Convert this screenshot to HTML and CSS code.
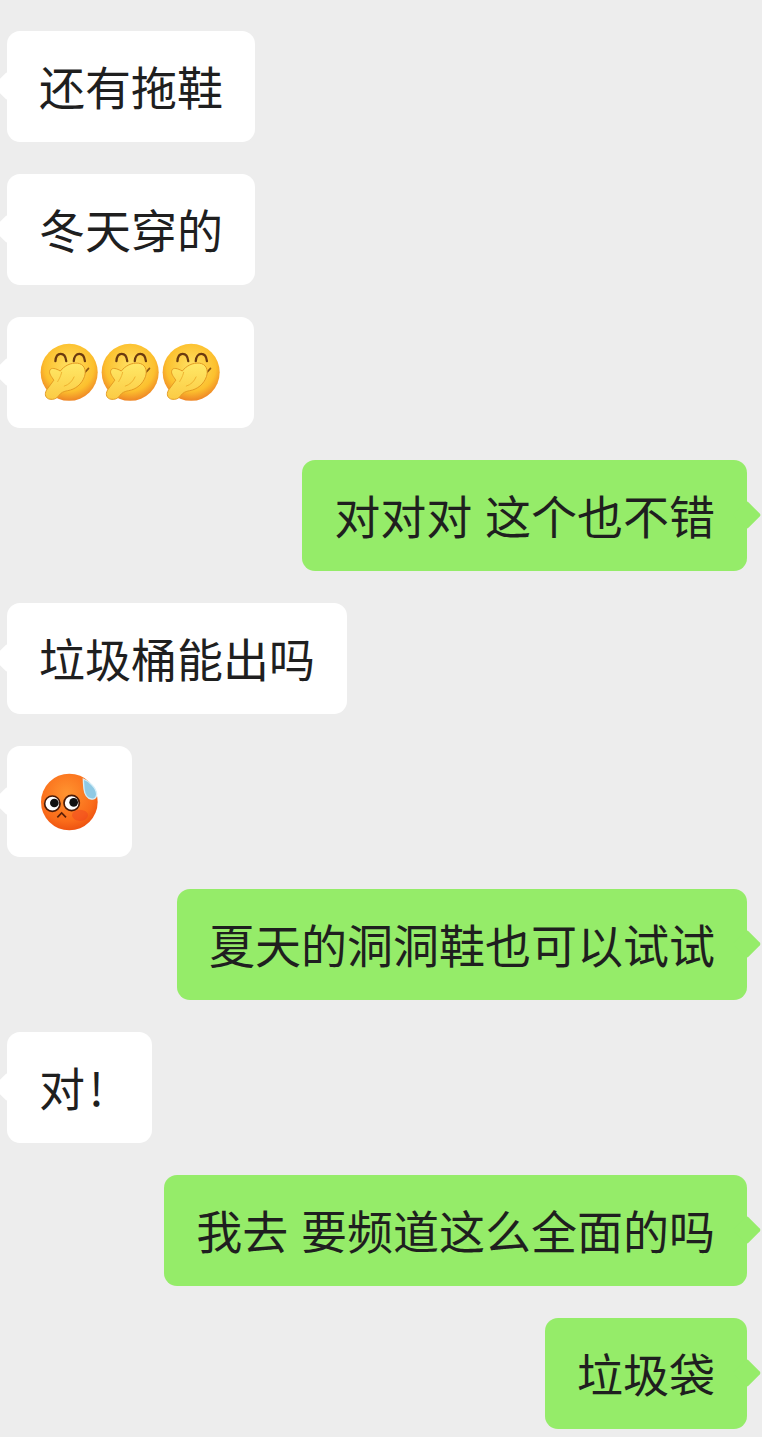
FILE: index.html
```html
<!DOCTYPE html>
<html lang="zh-CN">
<head>
    <meta charset="UTF-8">
    <meta name="viewport" content="width=device-width, initial-scale=1.0">
    <title>聊天记录</title>
    <link rel="stylesheet" href="styles.css">
</head>
<body>
    <svg class="defs" width="0" height="0" aria-hidden="true">
        <defs>
            <radialGradient id="yellowFace" cx="50%" cy="40%" r="60%">
                <stop offset="0%" stop-color="#ffe163"/>
                <stop offset="72%" stop-color="#fcc02e"/>
                <stop offset="100%" stop-color="#ee8526"/>
            </radialGradient>
            <linearGradient id="handFill" x1="0" y1="0" x2="0" y2="1">
                <stop offset="0%" stop-color="#ffe866"/>
                <stop offset="100%" stop-color="#fbcb45"/>
            </linearGradient>
            <radialGradient id="orangeFace" cx="45%" cy="35%" r="68%">
                <stop offset="0%" stop-color="#ff9430"/>
                <stop offset="72%" stop-color="#fa6c1a"/>
                <stop offset="100%" stop-color="#ec4f10"/>
            </radialGradient>
            <symbol id="coverMouth" viewBox="30 30 183 180">
                <circle cx="119" cy="118" r="87" fill="url(#yellowFace)"/>
                <path d="M77 84c2-30 30-30 33 0M133 84c2-30 31-30 34 0" fill="none" stroke="#6b3a10" stroke-width="7" stroke-linecap="round"/>
                <path d="M162 124l16-18" fill="none" stroke="#8a5312" stroke-width="5" stroke-linecap="round"/>
                <path d="M60 200C48 198 42 186 50 172L72 142C66 132 56 122 60 112C64 102 78 106 92 114C104 98 124 88 144 90C164 92 172 110 166 130C158 154 138 170 114 174C102 176 94 180 88 188C82 198 72 202 60 200z" fill="url(#handFill)" stroke="#e39a22" stroke-width="3"/>
                <path d="M84 146c4-8 8-12 12-28M104 160c14-4 24-14 30-28" fill="none" stroke="#eeb02f" stroke-width="3" stroke-linecap="round"/>
            </symbol>
            <symbol id="sweatFace" viewBox="30 20 180 180">
                <circle cx="118" cy="110" r="85" fill="url(#orangeFace)"/>
                <ellipse cx="150" cy="150" rx="24" ry="17" fill="#ee3b22" opacity=".4"/>
                <circle cx="67" cy="115" r="23" fill="#fff" stroke="#4a1a06" stroke-width="5"/>
                <circle cx="125" cy="113" r="23" fill="#fff" stroke="#4a1a06" stroke-width="5"/>
                <circle cx="73" cy="113" r="13" fill="#111"/>
                <circle cx="131" cy="111" r="13" fill="#111"/>
                <path d="M82 156l13-13 13 13" fill="none" stroke="#5a1f08" stroke-width="5"/>
                <path d="M160 41c16 6 40 26 40 46 0 10-8 16-16 14-14-2-20-14-22-30-1-10-2-20-2-30z" fill="#8fc9e4" stroke="#d5eef8" stroke-width="4"/>
            </symbol>
        </defs>
    </svg>

    <div class="chat">
        <div class="msg left">还有拖鞋</div>
        <div class="msg left">冬天穿的</div>
        <div class="msg left emoji-msg">
            <svg class="emoji"><use href="#coverMouth"/></svg>
            <svg class="emoji"><use href="#coverMouth"/></svg>
            <svg class="emoji"><use href="#coverMouth"/></svg>
        </div>
        <div class="msg right">对对对 这个也不错</div>
        <div class="msg left">垃圾桶能出吗</div>
        <div class="msg left emoji-msg">
            <svg class="emoji"><use href="#sweatFace"/></svg>
        </div>
        <div class="msg right">夏天的洞洞鞋也可以试试</div>
        <div class="msg left">对<span class="bang">!</span></div>
        <div class="msg right">我去 要频道这么全面的吗</div>
        <div class="msg right">垃圾袋</div>
    </div>
</body>
</html>
```

FILE: styles.css
```css
html, body {
    margin: 0;
    padding: 0;
}
body {
    background-color: #ededed;
    color: #1f1f1f;
    font-family: "Noto Sans CJK SC", "Liberation Sans", sans-serif;
    font-size: 46px;
    overflow-x: hidden;
}
.defs {
    position: absolute;
}
.chat {
    display: flex;
    flex-direction: column;
    gap: 32px;
    padding: 31px 15px 8px 7px;
}
.msg {
    position: relative;
    display: flex;
    align-items: center;
    box-sizing: border-box;
    height: 111px;
    padding: 0 32px 4px;
    border-radius: 13px;
    white-space: pre;
    word-spacing: 2.4px;
}
.msg::before {
    content: "";
    position: absolute;
    top: 44.5px;
    width: 20px;
    height: 20px;
    background-color: inherit;
    border-radius: 2px;
    transform: rotate(45deg);
}
.left {
    align-self: flex-start;
    background-color: #fff;
}
.left::before {
    left: -10px;
}
.right {
    align-self: flex-end;
    background-color: #95ec69;
}
.right::before {
    right: -10px;
}
.emoji-msg {
    gap: 1px;
    padding: 0 32.5px;
}
.emoji {
    width: 60px;
    height: 60px;
}
.bang {
    width: 31px;
    padding-left: 4px;
}
```
